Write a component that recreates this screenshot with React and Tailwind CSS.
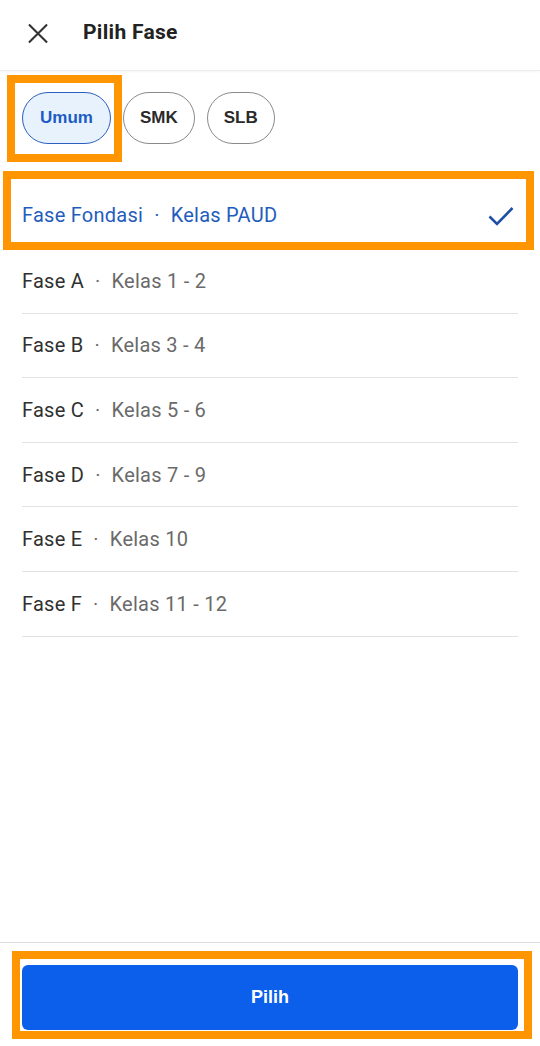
import React, { useState } from 'react';

const PHASES = [
  { id: 'fondasi', name: 'Fase Fondasi', kelas: 'Kelas PAUD' },
  { id: 'a', name: 'Fase A', kelas: 'Kelas 1 - 2' },
  { id: 'b', name: 'Fase B', kelas: 'Kelas 3 - 4' },
  { id: 'c', name: 'Fase C', kelas: 'Kelas 5 - 6' },
  { id: 'd', name: 'Fase D', kelas: 'Kelas 7 - 9' },
  { id: 'e', name: 'Fase E', kelas: 'Kelas 10' },
  { id: 'f', name: 'Fase F', kelas: 'Kelas 11 - 12' },
];

const TABS = ['Umum', 'SMK', 'SLB'];

function App() {
  const [tab, setTab] = useState('Umum');
  const [selected, setSelected] = useState('fondasi');

  return (
    <div className="relative flex h-[1046px] w-[540px] flex-col bg-white font-['Roboto',sans-serif]">
      {/* Header */}
      <div className="flex h-[71px] items-center border-b border-[#ececec] pb-[4px] shadow-[0_1px_2px_rgba(0,0,0,0.04)]">
        <button className="ml-[28px] flex h-5 w-5 items-center justify-center text-[#333]">
          <svg width="21" height="21" viewBox="0 0 21 21" fill="none" stroke="currentColor" strokeWidth="2.2">
            <path d="M1 1L20 20M20 1L1 20" />
          </svg>
        </button>
        <h1 className="ml-[35px] text-[21px] font-bold tracking-[0.3px] text-[#222]">Pilih Fase</h1>
      </div>

      {/* Tabs */}
      <div className="flex gap-3 px-[22px] pt-[21px]">
        {TABS.map((t) => (
          <button
            key={t}
            onClick={() => setTab(t)}
            className={
              t === tab
                ? "h-[52px] rounded-full border border-[#2c5fbf] bg-[#e8f2fd] px-[17px] font-['Liberation_Sans',sans-serif] text-[17px] font-bold text-[#1c5cc4]"
                : "h-[52px] rounded-full border border-[#8a8a8a] bg-white px-[16px] font-['Liberation_Sans',sans-serif] text-[17px] font-bold text-[#2a2a2a]"
            }
          >
            {t}
          </button>
        ))}
      </div>

      {/* List */}
      <div className="mt-[37px] px-[22px]">
        {PHASES.map((p) => {
          const active = p.id === selected;
          return (
            <div
              key={p.id}
              onClick={() => setSelected(p.id)}
              className={`flex items-center justify-between border-b border-[#e2e2e2] ${active ? 'h-[68px]' : 'h-[64.6px]'}`}
            >
              <div className="text-[20px] tracking-[0.25px]">
                <span className={active ? 'text-[#1f5dbd]' : 'text-[#303030]'}>{p.name}</span>
                <span className={active ? 'mx-[11px] text-[#1f5dbd]' : 'mx-[11px] text-[#6a6a6a]'}>·</span>
                <span className={active ? 'text-[#1f5dbd]' : 'text-[#6a6a6a]'}>{p.kelas}</span>
              </div>
              {active && (
                <svg className="mr-[4px] mt-[2px]" width="26" height="20" viewBox="0 0 26 20" fill="none" stroke="#1d4fa6" strokeWidth="2.6">
                  <path d="M1.5 10.5L9 18L24.5 2" />
                </svg>
              )}
            </div>
          );
        })}
      </div>

      {/* Footer */}
      <div className="mt-auto border-t border-[#dcdcdc] px-[22px] pt-[22px] pb-[16px]">
        <button className="flex h-[65px] w-full items-center justify-center rounded-[6px] bg-[#0b5fea] font-['Liberation_Sans',sans-serif] text-[18px] font-bold text-white">
          Pilih
        </button>
      </div>

      {/* Annotation highlights */}
      <div className="pointer-events-none absolute left-[7px] top-[75px] h-[87px] w-[115px] border-8 border-[#ff9500]" />
      <div className="pointer-events-none absolute left-[3px] top-[171px] h-[79px] w-[531px] border-8 border-[#ff9500]" />
      <div className="pointer-events-none absolute left-[12px] top-[951px] h-[88px] w-[520px] border-8 border-[#ff9500]" />
    </div>
  );
}

export default App;
